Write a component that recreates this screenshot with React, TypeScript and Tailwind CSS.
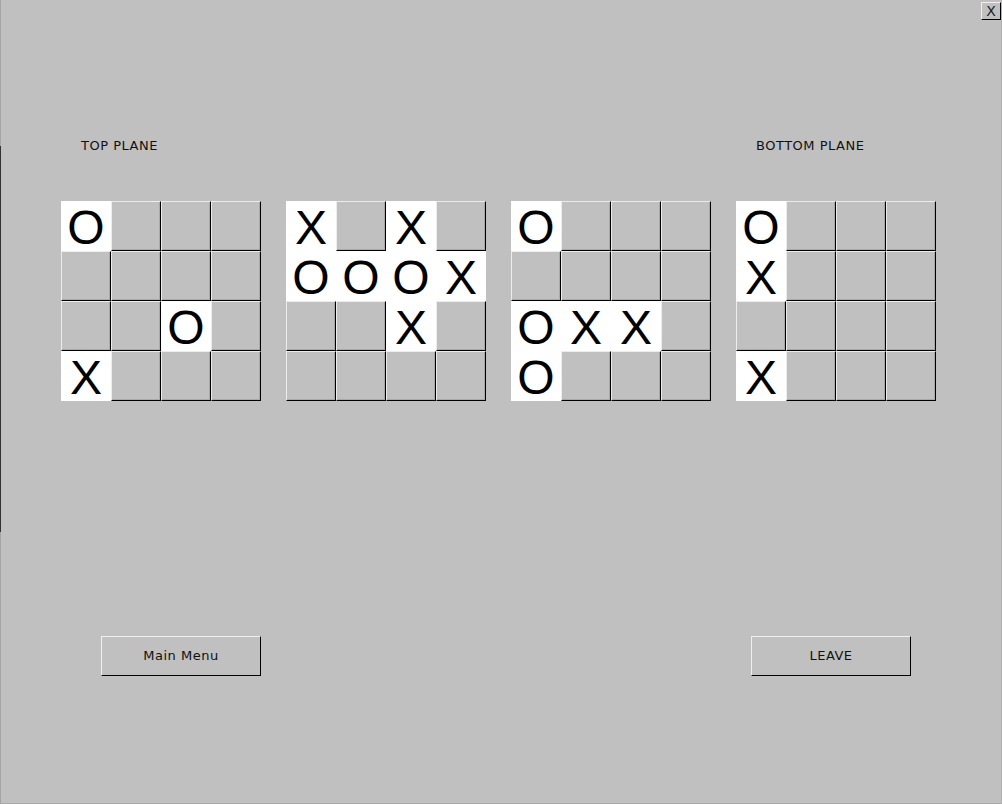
import React from "react";

type Cell = "" | "X" | "O";

const boards: Cell[][][] = [
  [
    ["O", "", "", ""],
    ["", "", "", ""],
    ["", "", "O", ""],
    ["X", "", "", ""],
  ],
  [
    ["X", "", "X", ""],
    ["O", "O", "O", "X"],
    ["", "", "X", ""],
    ["", "", "", ""],
  ],
  [
    ["O", "", "", ""],
    ["", "", "", ""],
    ["O", "X", "X", ""],
    ["O", "", "", ""],
  ],
  [
    ["O", "", "", ""],
    ["X", "", "", ""],
    ["", "", "", ""],
    ["X", "", "", ""],
  ],
];

const uiFont = { fontFamily: '"DejaVu Sans", "Liberation Sans", sans-serif' };
const bigFont = { fontFamily: '"Liberation Sans", Arial, sans-serif' };

function Board({ data }: { data: Cell[][] }) {
  return (
    <div className="grid grid-cols-4 w-[200px] h-[200px]">
      {data.flat().map((c, i) =>
        c ? (
          <div
            key={i}
            className="w-[50px] h-[50px] bg-white flex items-center justify-center pt-[4px] text-[48px] text-black leading-none"
            style={bigFont}
          >
            {c}
          </div>
        ) : (
          <div
            key={i}
            className="w-[50px] h-[50px] bg-[#c0c0c0] border border-t-[#ececec] border-l-[#ececec] border-r-black border-b-black shadow-[inset_-1px_-1px_0_#a8a8a8]"
          />
        )
      )}
    </div>
  );
}

function Button({ label }: { label: string }) {
  return (
    <div
      className="w-[160px] h-[40px] bg-[#c0c0c0] border border-t-[#f0f0f0] border-l-[#f0f0f0] border-r-black border-b-black flex items-center justify-center text-[13px] tracking-[0.5px] text-[#111]"
      style={uiFont}
    >
      {label}
    </div>
  );
}

export default function App() {
  return (
    <div className="w-[1002px] h-[804px] bg-[#c0c0c0] flex overflow-hidden">
      <div className="w-[1px] h-full flex flex-col bg-[#a4a4a4]">
        <div className="h-[146px]" />
        <div className="h-[386px] bg-[#333333]" />
      </div>
      <div className="flex-1 flex flex-col border-b border-b-[#a8a8a8] border-r border-r-[#b0b0b0]">
        <div className="flex justify-end pt-[2px]">
          <div
            className="w-[20px] h-[18px] bg-[#c0c0c0] border border-t-[#f0f0f0] border-l-[#f0f0f0] border-r-black border-b-black flex items-center justify-center text-[14px] leading-none text-[#222]"
            style={uiFont}
          >
            X
          </div>
        </div>

        <div
          className="flex mt-[118px] pl-[80px] h-[16px] items-center text-[13px] tracking-[0.5px] text-[#111]"
          style={uiFont}
        >
          <div className="w-[675px]">TOP PLANE</div>
          <div>BOTTOM PLANE</div>
        </div>

        <div className="flex gap-[25px] mt-[47px] pl-[60px]">
          {boards.map((b, i) => (
            <Board key={i} data={b} />
          ))}
        </div>

        <div className="flex gap-[490px] mt-[235px] pl-[100px]">
          <Button label="Main Menu" />
          <Button label="LEAVE" />
        </div>
      </div>
    </div>
  );
}
